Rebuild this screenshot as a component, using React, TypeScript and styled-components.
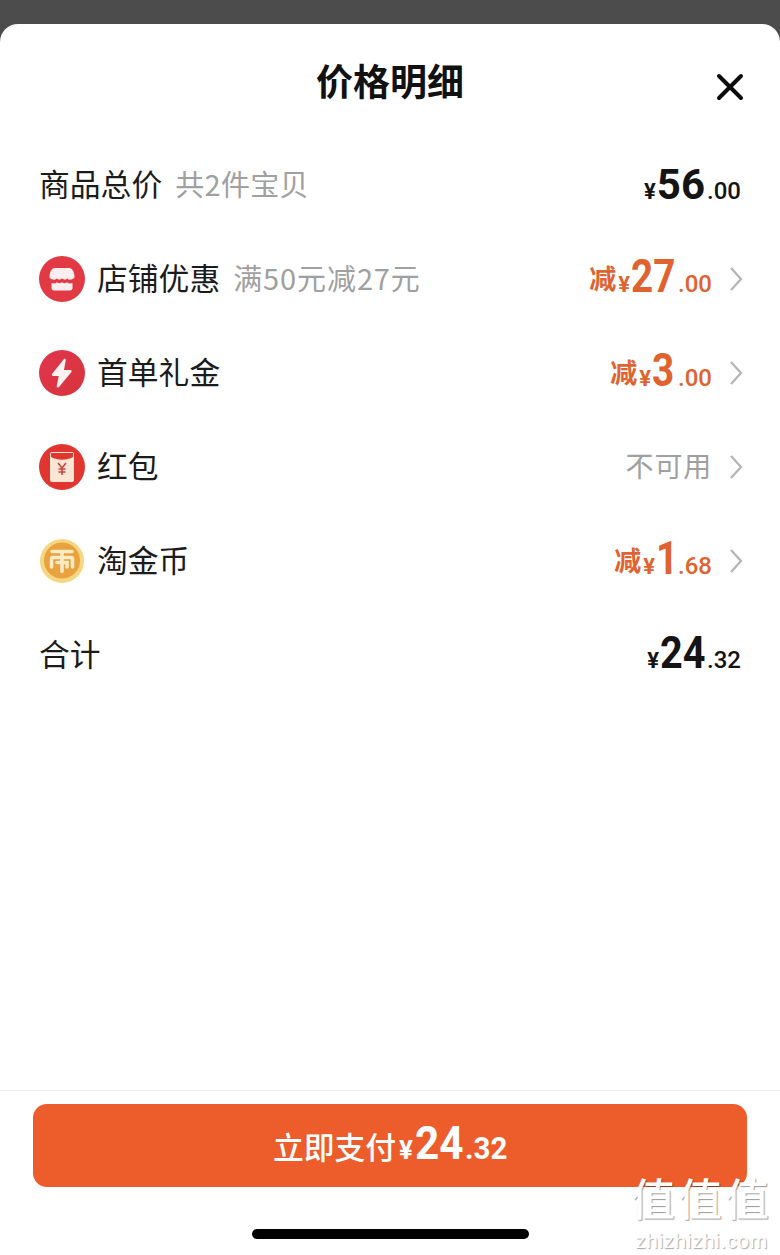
import React from "react";
import styled, { createGlobalStyle } from "styled-components";

const GlobalStyle = createGlobalStyle`
  html, body {
    margin: 0;
    padding: 0;
    background: #ffffff;
  }
`;

const cjk = `"Noto Sans CJK SC", "Noto Sans", sans-serif`;
const digits = `Roboto, "Liberation Sans", "Noto Sans CJK SC", sans-serif`;

const Page = styled.div`
  width: 780px;
  height: 1255px;
  display: flex;
  flex-direction: column;
  background: #4c4c4c;
  overflow: hidden;
  position: relative;
  font-family: ${cjk};
  color: #151515;
`;

const Sheet = styled.div`
  margin-top: 24px;
  flex: 1;
  display: flex;
  flex-direction: column;
  background: #ffffff;
  border-radius: 18px 18px 0 0;
`;

const Header = styled.header`
  height: 113px;
  padding: 0 36px;
  box-sizing: border-box;
  display: grid;
  grid-template-columns: 1fr auto 1fr;
`;

const Title = styled.h1`
  grid-column: 2;
  margin: 28px 0 0;
  font-size: 37px;
  line-height: 56px;
  font-weight: 700;
  color: #111111;
`;

const Close = styled.button`
  grid-column: 3;
  justify-self: end;
  width: 28px;
  height: 28px;
  margin: 49px 0 0;
  padding: 0;
  border: 0;
  background: none;
  svg {
    display: block;
  }
`;

const Row = styled.div`
  height: 94px;
  padding: 1px 36px 0 39px;
  box-sizing: border-box;
  display: flex;
  align-items: center;
`;

const Badge = styled.svg`
  width: 46px;
  height: 46px;
  margin-right: 12px;
  flex: none;
`;

const Label = styled.span`
  margin-bottom: 4px;
  font-size: 30.8px;
  line-height: 40px;
  color: #1b1b1b;
`;

const Note = styled.span<{ $track: number }>`
  margin: 0 0 4px 13px;
  font-size: 29px;
  line-height: 40px;
  letter-spacing: ${(p) => p.$track}px;
  color: #a0a0a0;
`;

const Right = styled.div`
  margin-left: auto;
  display: flex;
  align-items: center;
`;

const Amount = styled.div<{ $tone?: "dark" | "orange"; $lift?: number }>`
  display: flex;
  align-items: baseline;
  margin-bottom: ${(p) => p.$lift ?? 5}px;
  margin-right: ${(p) => (p.$tone === "orange" ? 0 : 3)}px;
  font-family: ${digits};
  color: ${(p) => (p.$tone === "orange" ? "#e0622f" : "#141414")};
`;

const Cut = styled.span`
  font-family: ${cjk};
  font-size: 27px;
  line-height: 40px;
  font-weight: 700;
  margin-right: 2px;
  position: relative;
  top: -3px;
`;

const Yen = styled.span`
  font-size: 22px;
  font-weight: 700;
  margin-right: 1px;
`;

const Whole = styled.span<{ $size?: number; $squeeze?: number; $width?: number }>`
  display: inline-block;
  width: ${(p) => (p.$width ? `${p.$width}px` : "auto")};
  font-size: ${(p) => p.$size ?? 42}px;
  line-height: 56px;
  font-weight: 700;
  white-space: nowrap;
  transform-origin: left center;
  transform: scaleX(${(p) => p.$squeeze ?? 1});
`;

const Cents = styled.span<{ $gap?: number }>`
  font-size: 24px;
  font-weight: 500;
  margin-left: ${(p) => p.$gap ?? 2}px;
`;

const Unavailable = styled.span`
  margin-bottom: 4px;
  font-size: 28px;
  line-height: 40px;
  letter-spacing: 0.8px;
  color: #a0a0a0;
`;

const Chevron = styled.svg`
  width: 14px;
  height: 26px;
  margin-left: 17px;
  margin-right: 1px;
  flex: none;
`;

const Footer = styled.footer`
  margin-top: auto;
  border-top: 1px solid #eeeeee;
  padding: 13px 33px 16px;
  display: flex;
  flex-direction: column;
  align-items: center;
`;

const PayButton = styled.button`
  width: 714px;
  height: 83px;
  padding: 0 0 4px;
  border: 0;
  border-radius: 14px;
  background: #ec5d2b;
  color: #ffffff;
  display: flex;
  align-items: baseline;
  justify-content: center;
  line-height: 79px;
  font-family: ${digits};
`;

const PayLabel = styled.span`
  font-family: ${cjk};
  font-size: 30.8px;
  font-weight: 500;
`;

const PayYen = styled.span`
  margin: 0 2px 0 3px;
  font-size: 26px;
  font-weight: 700;
`;

const PayWhole = styled.span`
  display: inline-block;
  width: 50px;
  font-size: 46px;
  font-weight: 700;
  white-space: nowrap;
  transform-origin: left center;
  transform: scaleX(0.92);
`;

const PayCents = styled.span`
  display: inline-block;
  width: 42px;
  font-size: 31px;
  font-weight: 700;
  white-space: nowrap;
  transform-origin: left center;
  transform: scaleX(0.95);
`;

const HomeBar = styled.div`
  width: 277px;
  height: 10px;
  margin-top: 42px;
  border-radius: 5px;
  background: #000000;
`;

const Watermark = styled.div`
  position: absolute;
  right: 8px;
  bottom: 2px;
  width: 141px;
  display: flex;
  flex-direction: column;
  align-items: center;
  color: #ffffff;
`;

const MarkGlyphs = styled.div`
  font-size: 44px;
  line-height: 44px;
  font-weight: 500;
  letter-spacing: 3px;
  white-space: nowrap;
  text-shadow: 1px 1px 1px rgba(0, 0, 0, 0.4);
`;

const MarkUrl = styled.div`
  margin-top: 10px;
  font-family: "Liberation Sans", sans-serif;
  font-size: 21px;
  line-height: 24px;
  letter-spacing: 0.5px;
  color: #ffffff;
  text-shadow: 1px 1px 1px rgba(0, 0, 0, 0.35);
`;

const ShopIcon = () => (
  <Badge viewBox="0 0 46 46">
    <circle cx="23" cy="23" r="23" fill="#e23a45" />
    <path
      d="M16 12h14c3 0 5 3 5.500 8 .2 2-1 3-2 3-2 1-4 1-5-.5-2 1.500-3 1.500-5.500 0-2 1.500-3 1.500-5.500 0-1 1.500-3 1.500-5 .5-1 0-2.200-1-2-3C11 15 13 12 16 12z"
      fill="#fbeeee"
    />
    <path
      d="M12.500 27c2.500.8 4 .5 5.500-.8 2 1.400 3 1.400 5 0 2 1.400 3 1.400 5 0 1.500 1.300 3 1.600 5.500.8v5c0 1.500-1 2.500-2.500 2.500H15c-1.500 0-2.500-1-2.500-2.500z"
      fill="#fbeeee"
    />
  </Badge>
);

const BoltIcon = () => (
  <Badge viewBox="0 0 46 46">
    <defs>
      <linearGradient id="boltFill" x1="0" y1="0" x2="1" y2="1">
        <stop offset="0" stopColor="#e0354f" />
        <stop offset="1" stopColor="#d8343a" />
      </linearGradient>
    </defs>
    <circle cx="23" cy="23" r="23" fill="url(#boltFill)" />
    <path
      d="M25 9c1-.5 2 0 1.700 1.500L25 20h6.500c1 0 1.500 1 1 2L20 37c-1 1-2.500.5-2.300-1l2-10H14c-1 0-1.500-1-1-2z"
      fill="#fdf1f1"
    />
  </Badge>
);

const EnvelopeIcon = () => (
  <Badge viewBox="0 0 46 46">
    <circle cx="23" cy="23" r="23" fill="#e1352f" />
    <rect x="11" y="8" width="24" height="30" rx="2" fill="#fbe6d6" />
    <path d="M12 9h22v4c-7 3.500-15 3.500-22 0z" fill="#e1352f" />
    <path
      d="M19 19l4 5 4-5M23 24v7M19.500 25h7M19.500 28h7"
      fill="none"
      stroke="#c9473c"
      strokeWidth="1.600"
    />
  </Badge>
);

const CoinIcon = () => (
  <Badge viewBox="0 0 46 46">
    <circle cx="23" cy="23" r="22" fill="#f7d681" />
    <circle cx="23" cy="22.500" r="18" fill="#e8a23e" />
    <path
      d="M13 13.500h20M23 13.500v5M14 19.500h18c.8 0 1.500.7 1.500 1.500v8M14 19.500c-.8 0-1.500.7-1.500 1.500v8M23 19.500v14M18 24.500h10v4.500"
      fill="none"
      stroke="#fcebc4"
      strokeWidth="3.600"
      strokeLinecap="round"
    />
  </Badge>
);

const Arrow = () => (
  <Chevron viewBox="0 0 14 26">
    <path d="M2 2l10 11L2 24" fill="none" stroke="#b4b4b4" strokeWidth="2.200" />
  </Chevron>
);

const Discount = ({
  whole,
  cents,
  width,
  gap = 3,
}: {
  whole: string;
  cents: string;
  width: number;
  gap?: number;
}) => (
  <Amount $tone="orange">
    <Cut>减</Cut>
    <Yen>¥</Yen>
    <Whole $size={46} $squeeze={0.84} $width={width}>
      {whole}
    </Whole>
    <Cents $gap={gap}>.{cents}</Cents>
  </Amount>
);

const App: React.FC = () => (
  <Page>
    <GlobalStyle />
    <Sheet>
      <Header>
        <Title>价格明细</Title>
        <Close aria-label="关闭">
          <svg width="28" height="28" viewBox="0 0 28 28">
            <path d="M3 3l22 22M25 3L3 25" stroke="#0c0c0c" strokeWidth="4" strokeLinecap="round" />
          </svg>
        </Close>
      </Header>

      <Row>
        <Label>商品总价</Label>
        <Note $track={0.3}>共2件宝贝</Note>
        <Right>
          <Amount $lift={0}>
            <Yen>¥</Yen>
            <Whole>56</Whole>
            <Cents>.00</Cents>
          </Amount>
        </Right>
      </Row>

      <Row>
        <ShopIcon />
        <Label>店铺优惠</Label>
        <Note $track={0.9}>满50元减27元</Note>
        <Right>
          <Discount whole="27" cents="00" width={44} />
          <Arrow />
        </Right>
      </Row>

      <Row>
        <BoltIcon />
        <Label>首单礼金</Label>
        <Right>
          <Discount whole="3" cents="00" width={23} />
          <Arrow />
        </Right>
      </Row>

      <Row>
        <EnvelopeIcon />
        <Label>红包</Label>
        <Right>
          <Unavailable>不可用</Unavailable>
          <Arrow />
        </Right>
      </Row>

      <Row>
        <CoinIcon />
        <Label>淘金币</Label>
        <Right>
          <Discount whole="1" cents="68" width={22} gap={0} />
          <Arrow />
        </Right>
      </Row>

      <Row>
        <Label>合计</Label>
        <Right>
          <Amount $lift={4}>
            <Yen>¥</Yen>
            <Whole $size={44} $squeeze={0.9} $width={46}>
              24
            </Whole>
            <Cents $gap={1}>.32</Cents>
          </Amount>
        </Right>
      </Row>

      <Footer>
        <PayButton>
          <PayLabel>立即支付</PayLabel>
          <PayYen>¥</PayYen>
          <PayWhole>24</PayWhole>
          <PayCents>.32</PayCents>
        </PayButton>
        <HomeBar />
      </Footer>
    </Sheet>
    <Watermark>
      <MarkGlyphs>值值值</MarkGlyphs>
      <MarkUrl>zhizhizhi.com</MarkUrl>
    </Watermark>
  </Page>
);

export default App;
